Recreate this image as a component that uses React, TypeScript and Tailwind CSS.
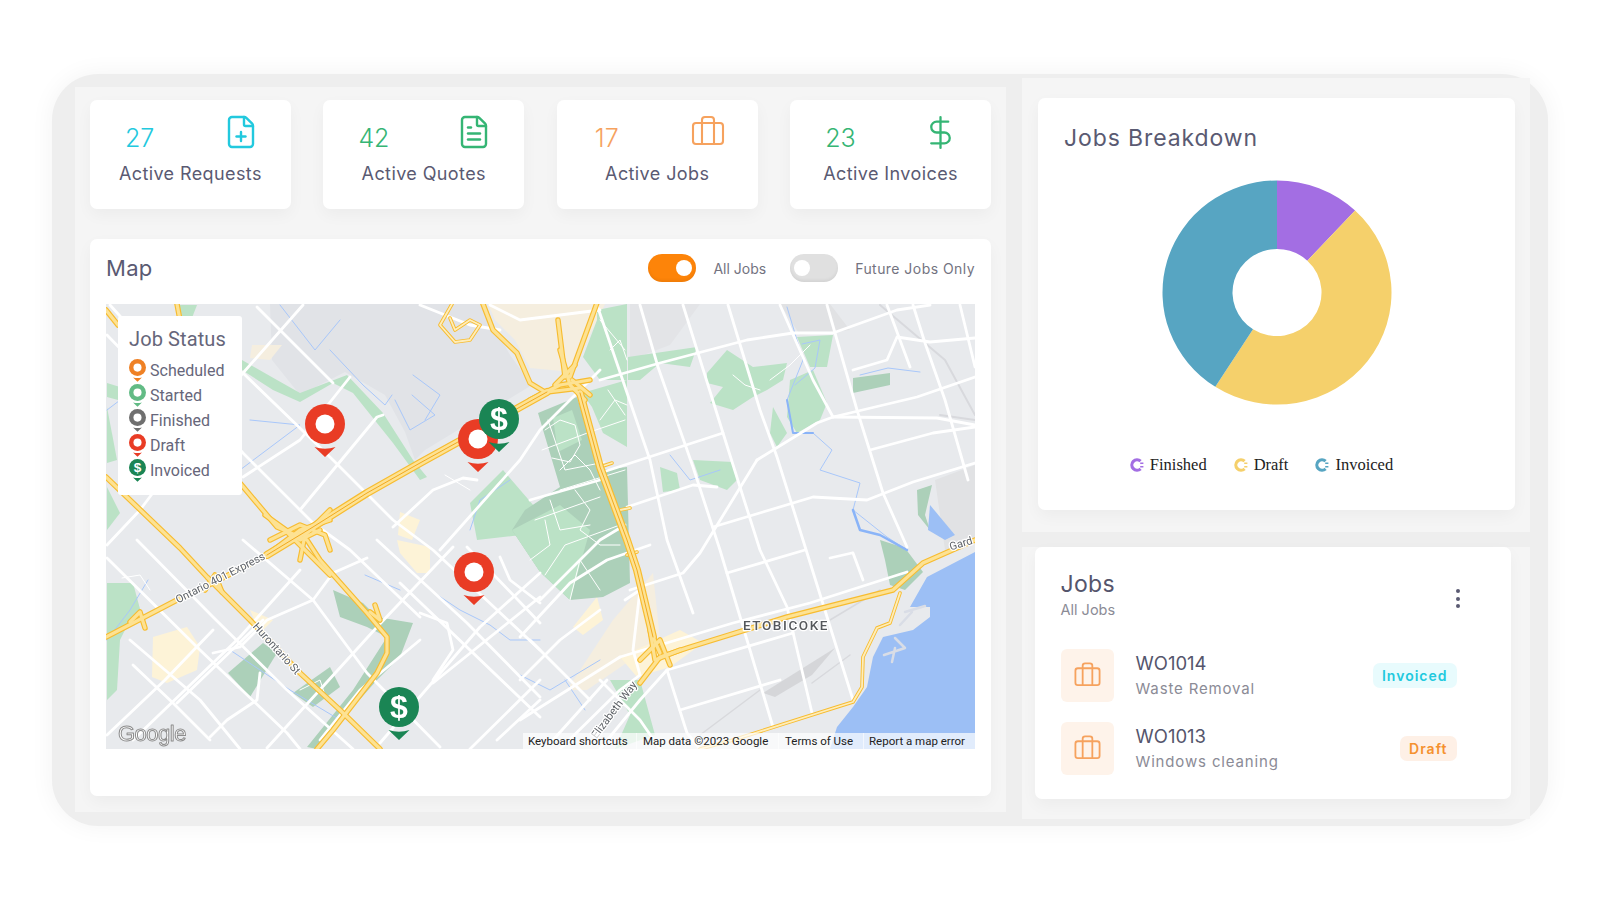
import { Briefcase, DollarSign, FilePlus, FileText } from 'lucide-react'
import type { ReactNode } from 'react'

const sans = 'font-["Inter",sans-serif]'

const stats = [
  { value: '27', label: 'Active Requests', color: 'text-[#22c9de]', pad: 'pl-[35px]', icon: <FilePlus size={36} strokeWidth={1.6} /> },
  { value: '42', label: 'Active Quotes', color: 'text-[#35b574]', pad: 'pl-[35px]', icon: <FileText size={36} strokeWidth={1.6} /> },
  { value: '17', label: 'Active Jobs', color: 'text-[#f6a25e]', pad: 'pl-[38px]', icon: <Briefcase size={36} strokeWidth={1.4} /> },
  { value: '23', label: 'Active Invoices', color: 'text-[#35b574]', pad: 'pl-[35px]', icon: <DollarSign size={37} strokeWidth={1.5} /> },
]

// everything in the map is in page pixels, the viewBox does the offset
const land = [
  { fill: '#e1e3e7', pts: '270,304 482,304 510,355 532,385 425,450 415,460 405,432 385,395 345,372 300,395 272,360' },
  { fill: '#e3e4e7', pts: '630,304 700,304 670,345 630,360' },
  { fill: '#e1e2e4', pts: '780,304 830,304 850,330 800,335' },
  { fill: '#f5eedf', pts: '488,304 605,304 572,372 530,368 515,340 495,320' },
  { fill: '#f5eedf', pts: '567,690 613,620 653,573 660,640 587,690' },
  { fill: '#fdf3d7', pts: '153,637 187,627 200,647 197,670 167,683 152,677' },
  { fill: '#fdf3d7', pts: '250,610 273,620 260,633' },
  { fill: '#fdf3d7', pts: '397,540 430,547 430,573 417,573 400,553' },
  { fill: '#fdf3d7', pts: '620,657 680,630 703,643 670,667 637,677' },
  { fill: '#fdf3d7', pts: '573,627 597,597 603,620 583,635' },
  { fill: '#fdf3d7', pts: '400,512 420,520 412,540 398,535' },
  { fill: '#f5eedf', pts: '252,345 282,345 270,360 250,358' },
  { fill: '#bbe2c6', pts: '242,360 277,380 300,393 347,375 383,413 413,460 427,477 420,480 393,443 353,393 333,383 300,402 273,390 242,370' },
  { fill: '#bbe2c6', pts: '107,383 120,387 118,400 107,397' },
  { fill: '#bbe2c6', pts: '107,407 117,460 107,463' },
  { fill: '#bbe2c6', pts: '107,487 120,513 107,530' },
  { fill: '#bbe2c6', pts: '177,305 197,305 190,323 180,320' },
  { fill: '#bbe2c6', pts: '470,503 503,470 540,513 540,533 477,540' },
  { fill: '#bbe2c6', pts: '107,583 133,583 143,620 130,620 120,640 117,690 107,700' },
  { fill: '#acd0b9', pts: '228,673 263,643 277,653 250,697' },
  { fill: '#acd0b9', pts: '333,590 363,603 377,617 413,623 400,657 377,680 333,730 317,749 307,747 353,690 387,637 367,627 340,617' },
  { fill: '#acd0b9', pts: '293,693 330,667 340,687 313,707' },
  { fill: '#bbe2c6', pts: '597,310 627,304 627,380 600,380 583,357 597,320' },
  { fill: '#bbe2c6', pts: '582,393 627,380 627,447 603,433 592,407' },
  { fill: '#acd0b9', pts: '538,413 577,397 600,470 627,467 630,583 603,597 570,600 540,572 512,530 525,510 560,487' },
  { fill: '#bbe2c6', pts: '553,418 572,410 582,440 558,452' },
  { fill: '#bbe2c6', pts: '512,530 560,505 590,530 570,600 540,572' },
  { fill: '#bbe2c6', pts: '628,357 697,347 690,367 660,363 640,380 628,380' },
  { fill: '#bbe2c6', pts: '707,373 727,350 753,367 787,363 783,380 767,390 753,397 733,410 710,403 723,387 707,383' },
  { fill: '#bbe2c6', pts: '797,337 833,335 827,367 810,367' },
  { fill: '#bbe2c6', pts: '790,380 813,370 827,403 820,420 797,433 787,417' },
  { fill: '#bbe2c6', pts: '773,407 787,433 777,447 770,433' },
  { fill: '#bbe2c6', pts: '693,460 733,462 737,480 727,490 700,480' },
  { fill: '#bbe2c6', pts: '660,467 677,473 680,490 663,492' },
  { fill: '#acd0b9', pts: '853,378 890,373 890,385 853,393' },
  { fill: '#acd0b9', pts: '917,490 932,485 925,515 930,530 918,515' },
  { fill: '#e1e2e4', pts: '935,480 975,465 975,540 945,550' },
  { fill: '#bbe2c6', pts: '610,680 640,680 655,735 615,749 630,715' },
  { fill: '#acd0b9', pts: '880,540 905,548 923,572 905,590 890,585 885,560' },
  { fill: '#9cbff5', pts: '975,552 927,577 910,607 930,607 930,617 913,630 883,637 873,657 867,687 853,707 837,727 830,749 975,749' },
  { fill: '#9cbff5', pts: '930,505 955,535 945,540 928,530' },
  { fill: '#d5d6d9', pts: '763,693 835,648 812,675 775,697' },
]

const rivers = [
  'M787 307L803 360L787 400L793 433L813 433L832 450L820 470L860 483L853 510L887 537L907 550',
  'M802 344L820 340L815 368L795 385',
  'M330 350L363 385L385 405L392 395',
  'M413 375L440 395L425 420',
  'M395 400L410 430L435 415L412 395',
  'M120 350L140 385L107 410',
  'M250 420L300 425L240 470',
  'M280 305L315 350L340 320',
  'M860 375L888 368L920 372',
  'M670 455L690 480L720 470',
  'M107 640L130 610L148 580',
  'M230 650L290 690L340 720',
  'M430 590L460 610L490 625L510 640L540 640',
  'M365 575L400 590',
  'M600 660L550 690L520 675',
  'M565 680L585 710',
  'M470 530L480 500L510 480',
]

const roads = [
  // right half, steep ones
  '640,305 658,367 693,467 720,550 747,640 773,727',
  '683,305 723,433 740,487 760,550 787,607 812,713',
  '728,305 760,410 777,457 803,540 853,700',
  '780,305 813,380 833,417',
  '827,305 857,410 883,493 907,547',
  '887,305 910,367',
  '913,305 925,343 945,400 968,480',
  '960,305 975,367',
  '597,305 650,460 667,540 693,613',
  '853,553 863,580',
  '667,670 687,733 700,749',
  // right half, flat ones
  '600,380 660,363 747,340 793,333 833,333 897,310 930,305',
  '600,473 723,433',
  '627,507 693,485 717,487',
  '853,370 887,360 897,337 930,342 975,338',
  '757,460 817,423 833,417 917,397 975,377',
  '833,417 937,418 975,425',
  '870,450 933,433 975,427',
  '713,527 813,497 867,500 913,482 975,463',
  '727,573 805,550',
  '830,558 852,553',
  '630,590 683,573 700,553 757,460',
  '620,657 733,623 810,603 907,572',
  '667,670 793,633',
  '680,710 780,680',
  '520,637 570,583 607,560 650,545',
  '520,720 620,657',
  '553,740 607,680',
  '625,600 640,590 633,650 640,675',
  '540,600 600,540 625,525',
  '530,500 600,480',
  '560,749 620,690 640,675',
  '600,749 640,700 667,670',
  '520,680 560,640 600,610',
  '470,749 540,680',
  '590,700 560,670 530,640',
  '600,680 640,720 660,749',
  // left half, going down to the right
  '243,373 333,460 393,520 433,550 540,650',
  '110,305 243,453 313,523 350,550 420,617',
  '257,307 333,383',
  '107,558 200,650 287,733 300,749',
  '137,540 213,617 287,690 353,749',
  '243,540 313,600 367,673 440,747',
  '400,583 540,717',
  '377,540 467,623 540,697',
  '467,547 540,623',
  '107,335 165,395',
  '130,640 200,700 240,749',
  '133,665 173,703 210,740',
  // left half, going up to the right
  '300,510 377,417 383,415',
  '243,477 300,440 350,377',
  '243,373 303,305',
  '107,545 140,510 243,373',
  '440,550 520,460 540,430 600,370',
  '133,740 240,637 300,570',
  '177,703 263,620',
  '267,748 377,627 453,547',
  '380,743 480,627 540,573',
  '433,683 540,597',
  '497,740 540,700',
  '107,735 165,680 213,630',
  '213,653 240,647 267,620 313,600 333,573 367,558',
  '490,305 520,320 600,310',
  '420,305 470,325 500,330',
  '320,740 360,690 420,640',
  '433,680 453,650 447,623 420,613',
  '500,557 510,580 540,603',
  '260,673 257,700 227,720 210,737',
  '393,527 433,490 463,478 477,480',
]

const parkRoads = [
  '548,420 565,470 605,462',
  '542,450 590,432 625,420',
  '560,490 625,470',
  '535,520 600,497',
  '545,575 565,545 620,525',
  '570,600 580,560 600,590',
  '600,320 625,350',
  '608,390 625,415',
  '545,430 560,420 575,425 580,445 570,462 552,458',
  '560,470 575,455 590,470 600,490',
  '575,490 590,510 580,530 600,545 620,545',
  '550,500 560,530 590,525',
  '610,350 620,340 627,360',
  '530,560 550,545 545,520',
  '600,420 615,400 627,405',
  '770,380 790,365 810,345',
  '733,375 745,385 760,390',
  '122,578 140,575 150,590',
  '300,690 320,680 325,695',
  '445,475 470,490',
]

const wideHighways = [
  '267,555 313,527 367,493 420,463 467,437 520,407 547,392',
  '580,393 600,467 627,540 637,570 653,637',
]

const highways = [
  '106,637 133,623 177,600 213,583 267,555',
  '547,392 580,388',
  '558,320 565,377',
  '597,303 570,377',
  '483,304 493,330 517,353 530,383 545,392',
  '653,637 660,653',
  '640,683 660,657 687,648 787,617 893,590 923,563 975,540',
  '106,477 180,548 207,577 250,620 300,673 340,710 380,749',
  '240,483 277,527 307,540 320,560 367,613 387,637 387,653 377,673 333,730 317,749',
  '177,304 180,320',
  '106,310 118,325',
  '270,540 300,525 325,535 330,550',
  '267,555 300,530 330,520',
  '285,530 300,545 330,575',
  '265,515 300,540 320,530',
  '300,560 305,535 330,510',
  '530,400 560,385 590,380',
  '560,350 570,385 585,400',
  '575,365 555,385',
  '572,380 590,395',
  '650,630 655,660 680,650',
  '640,660 660,640 670,665',
  '130,622 140,612 145,628',
  '205,590 215,575 222,592',
  '370,612 380,620 375,605',
]

const thinHighways = [
  '900,593 890,623 877,628 863,657 862,687 853,702 837,707 733,740 700,749',
  '452,304 440,325 455,342 470,340 480,325 470,320 455,330 450,318',
  '600,467 612,463',
  '620,510 630,508',
  '627,555 637,552',
]

function Pin({ x, y, r, color, dollar }: { x: number; y: number; r: number; color: string; dollar?: boolean }) {
  const k = r / 20
  return (
    <g transform={`translate(${x} ${y}) scale(${k})`}>
      <path d="M-10.5 23Q0 26.5 10.5 23L0 33Z" fill={color} />
      <circle r="20" fill={color} />
      {dollar ? (
        <text y="11" textAnchor="middle" fontSize="32" fontWeight="700" fill="#fff" fontFamily="Liberation Sans, sans-serif">
          $
        </text>
      ) : (
        <circle r="9.5" fill="#fff" />
      )}
    </g>
  )
}

function Toggle({ on }: { on: boolean }) {
  return (
    <div className={`flex h-7 w-12 items-center rounded-full px-[4px] shadow-[inset_0_-2px_3px_rgba(0,0,0,0.06)] ${on ? 'justify-end bg-[#fd8409]' : 'justify-start bg-[#e0e0e0]'}`}>
      <div className="h-4 w-4 rounded-full bg-white" />
    </div>
  )
}

const legend = [
  { label: 'Scheduled', color: '#ef8125' },
  { label: 'Started', color: '#62bb85' },
  { label: 'Finished', color: '#6f6f6f' },
  { label: 'Draft', color: '#e93c25' },
  { label: 'Invoiced', color: '#1a8554', dollar: true },
]

function MapView() {
  return (
    <div className="relative h-[445px] w-[869px] overflow-hidden bg-[#e8eaed]">
      <svg width="869" height="445" viewBox="106 304 869 445" className="block blur-[0.4px]" fill="none" strokeLinejoin="round" strokeLinecap="round">
        {land.map((a, i) => (
          <polygon key={i} points={a.pts} fill={a.fill} />
        ))}
        {rivers.map((d, i) => (
          <path key={i} d={d} stroke="#a8c7fa" strokeWidth="1" />
        ))}
        <path d="M787 400L793 433L813 433" stroke="#8ab4f8" strokeWidth="2" />
        <path d="M853 510L860 530L880 535L907 550" stroke="#8ab4f8" strokeWidth="2.5" />
        <path d="M812 683L850 655M760 690L700 735M830 620L880 590" stroke="#d8d9dd" strokeWidth="1.5" />
        <path d="M880 305L945 360L975 415M940 415L975 420" stroke="#d8d9dd" strokeWidth="2" />
        {/* marinas along the shore */}
        <path d="M905 612L925 606M900 625L912 612M884 655L905 648L895 638M892 662L895 648" stroke="#d9dde6" strokeWidth="2.5" />
        {roads.map((p, i) => (
          <polyline key={i} points={p} stroke="#fff" strokeWidth="2.8" />
        ))}
        {parkRoads.map((p, i) => (
          <polyline key={i} points={p} stroke="#fff" strokeWidth="1" />
        ))}
        {thinHighways.map((p, i) => (
          <polyline key={i} points={p} stroke="#f7bc30" strokeWidth="3.6" />
        ))}
        {thinHighways.map((p, i) => (
          <polyline key={i} points={p} stroke="#feedbb" strokeWidth="1.8" />
        ))}
        {highways.map((p, i) => (
          <polyline key={i} points={p} stroke="#f7bc30" strokeWidth="5.5" />
        ))}
        {wideHighways.map((p, i) => (
          <polyline key={i} points={p} stroke="#f7bc30" strokeWidth="8" />
        ))}
        {highways.map((p, i) => (
          <polyline key={i} points={p} stroke="#fde293" strokeWidth="3.2" />
        ))}
        {wideHighways.map((p, i) => (
          <polyline key={i} points={p} stroke="#fde293" strokeWidth="5.6" />
        ))}
        {wideHighways.map((p, i) => (
          <polyline key={i} points={p} stroke="#f2a91f" strokeWidth="1" />
        ))}
        <g fontFamily="Roboto, sans-serif" fontSize="11" fill="#5f6368" stroke="#fff" strokeWidth="2.5" style={{ paintOrder: 'stroke' }} textAnchor="middle">
          <text transform="translate(222 581) rotate(-27)">Ontario 401 Express</text>
          <text transform="translate(274 651) rotate(48)">Hurontario St</text>
          <text transform="translate(617 712) rotate(-53)">Elizabeth Way</text>
          <text transform="translate(962 547) rotate(-17)">Gard</text>
          <text x="786" y="630" fontSize="13.5" fontWeight="500" letterSpacing="1.6" fill="#55585c">
            ETOBICOKE
          </text>
        </g>
        <text x="118" y="741" fontFamily="Liberation Sans, sans-serif" fontSize="22" fill="#fff" stroke="#8d8d8d" strokeWidth="1" letterSpacing="-0.5">
          Google
        </text>
        <Pin x={325} y={424} r={20} color="#e93c25" />
        <Pin x={478} y={439} r={20} color="#e93c25" />
        <Pin x={499} y={419} r={20} color="#1a8554" dollar />
        <Pin x={474} y={572} r={20} color="#e93c25" />
        <Pin x={399} y={707} r={20} color="#1a8554" dollar />
      </svg>

      <div className="absolute left-[12px] top-[12px] h-[179px] w-[124px] rounded-[3px] bg-white pl-[11px] pt-[10px] font-['Roboto',sans-serif] text-[#66667a]">
        <div className="text-[20px] leading-[26px] tracking-[0.1px]">Job Status</div>
        <div className="mt-[6px] flex flex-col">
          {legend.map((l) => (
            <div key={l.label} className="flex h-[25px] items-center gap-[4px] text-[16px]">
              <svg width="17" height="24" viewBox="-20 -20 40 56" className="shrink-0">
                <Pin x={0} y={0} r={20} color={l.color} dollar={l.dollar} />
              </svg>
              <span>{l.label}</span>
            </div>
          ))}
        </div>
      </div>

      <div className="absolute bottom-0 right-0 flex h-[16px] w-[452px] items-center bg-white/70 pt-[1px] font-['Roboto',sans-serif] text-[11.5px] text-[#222]">
        <span className="w-[113px] pl-[5px]">Keyboard shortcuts</span>
        <span className="w-[142px] border-l border-white/60 pl-[6px]">Map data ©2023 Google</span>
        <span className="w-[85px] border-l border-white/60 pl-[6px]">Terms of Use</span>
        <span className="border-l border-white/60 pl-[5px]">Report a map error</span>
      </div>
    </div>
  )
}

function Card({ className, children }: { className: string; children: ReactNode }) {
  return <div className={`rounded-[7px] bg-white shadow-[0_6px_16px_rgba(0,0,0,0.04)] ${className}`}>{children}</div>
}

function Donut() {
  const cx = 115
  const cy = 115
  const arc = (from: number, to: number, R: number, r: number) => {
    const p = (a: number, rad: number) => {
      const t = (a * Math.PI) / 180
      return `${(cx + rad * Math.sin(t)).toFixed(2)} ${(cy - rad * Math.cos(t)).toFixed(2)}`
    }
    const big = to - from > 180 ? 1 : 0
    return `M${p(from, R)}A${R} ${R} 0 ${big} 1 ${p(to, R)}L${p(to, r)}A${r} ${r} 0 ${big} 0 ${p(from, r)}Z`
  }
  return (
    <svg width="230" height="225" viewBox="0 0 230 230" preserveAspectRatio="none">
      <path d={arc(0, 43, 114.5, 44.5)} fill="#a36ee3" />
      <path d={arc(43, 212.6, 114.5, 44.5)} fill="#f5d06b" />
      <path d={arc(212.6, 360, 114.5, 44.5)} fill="#57a5c2" />
    </svg>
  )
}

function RingDot({ color }: { color: string }) {
  return (
    <svg width="14" height="14" viewBox="0 0 14 14" fill="none">
      <path d="M10.6 3.2A5.2 5.2 0 1 0 10.6 10.8" stroke={color} strokeWidth="3.2" />
      <path d="M10.2 5.2L13.4 5.2M10.2 8.8L13.4 8.8" stroke={color} strokeWidth="1.6" />
    </svg>
  )
}

function JobRow({ code, name, badge, tone, top }: { code: string; name: string; badge: string; tone: string; top: string }) {
  return (
    <div className={`flex h-[53px] items-center ${top}`}>
      <div className="flex h-[53px] w-[53px] items-center justify-center rounded-[6px] bg-[#fef3ea] text-[#f6a25e]">
        <Briefcase size={29} strokeWidth={1.5} />
      </div>
      <div className="ml-[22px] flex-1">
        <div className="text-[18.5px] leading-[26px] text-[#55556c]">{code}</div>
        <div className="text-[15px] leading-[26px] tracking-[0.85px] text-[#8b8b96]">{name}</div>
      </div>
      <div className={`flex h-[25px] items-center rounded-[7px] px-[9px] text-[14px] font-semibold tracking-[1px] ${tone}`}>{badge}</div>
    </div>
  )
}

export default function App() {
  return (
    <div className={`h-[900px] w-[1600px] overflow-hidden bg-white pl-[52px] pt-[74px] ${sans}`}>
      <div className="flex h-[752px] w-[1496px] items-start rounded-[46px] bg-[#eeeeee] pl-[23px] shadow-[0_0_24px_rgba(0,0,0,0.05)]">
        <div className="mt-[13px] h-[725px] w-[931px] bg-[#f5f5f5] pl-[15px] pt-[13px]">
          <div className="grid w-[901px] grid-cols-4 gap-x-[32.6px]">
            {stats.map((s) => (
              <Card key={s.label} className="h-[109px] pt-[14px]">
                <div className={`flex h-[48px] items-start justify-between pr-[32px] ${s.pad} ${s.color}`}>
                  <span className="mt-[9px] text-[25px] font-light leading-[30px]">{s.value}</span>
                  {s.icon}
                </div>
                <div className="text-center text-[18px] leading-[24px] tracking-[0.4px] text-[#5a5a72]">{s.label}</div>
              </Card>
            ))}
          </div>

          <Card className="mt-[30px] h-[557px] w-[901px] px-[16px]">
            <div className="flex h-[65px] items-center pb-[7px]">
              <span className="text-[22px] tracking-[0.3px] text-[#5a5a72]">Map</span>
              <div className="ml-auto flex items-center text-[14px] text-[#73737f]">
                <Toggle on />
                <span className="ml-[17px]">All Jobs</span>
                <span className="ml-[24px]">
                  <Toggle on={false} />
                </span>
                <span className="ml-[17px] tracking-[0.45px]">Future Jobs Only</span>
              </div>
            </div>
            <MapView />
          </Card>
        </div>

        <div className="ml-[16px] mt-[4px] flex w-[508px] flex-col gap-[15px]">
          <div className="h-[454px] bg-[#f5f5f5] pl-[16px] pt-[20px]">
            <Card className="h-[412px] w-[477px] pt-[25px]">
              <div className="pl-[26px] text-[23px] leading-[30px] tracking-[0.9px] text-[#5a5a72]">Jobs Breakdown</div>
              <div className="mt-[27px] flex justify-center">
                <Donut />
              </div>
              <div className="mt-[48px] flex justify-center gap-[27px] pr-[30px] font-['Liberation_Serif',serif] text-[16.5px] text-[#222]">
                <span className="flex items-center gap-[6px]"><RingDot color="#a36ee3" />Finished</span>
                <span className="flex items-center gap-[6px]"><RingDot color="#f5d06b" />Draft</span>
                <span className="flex items-center gap-[6px]"><RingDot color="#57a5c2" />Invoiced</span>
              </div>
            </Card>
          </div>

          <div className="h-[272px] bg-[#f5f5f5] pl-[12.5px]">
            <Card className="h-[252px] w-[476px] px-[26px] pt-[22px]">
              <div className="flex items-start justify-between pr-[26px]">
                <div>
                  <div className="text-[23px] leading-[30px] tracking-[0.3px] text-[#55556c]">Jobs</div>
                  <div className="text-[14.5px] leading-[22px] text-[#8b8b96]">All Jobs</div>
                </div>
                <div className="mr-[-1px] mt-[20px] flex flex-col gap-[3.5px]">
                  <span className="h-[4px] w-[4px] rounded-full bg-[#5a5a72]" />
                  <span className="h-[4px] w-[4px] rounded-full bg-[#5a5a72]" />
                  <span className="h-[4px] w-[4px] rounded-full bg-[#5a5a72]" />
                </div>
              </div>
              <div className="pr-[28px]">
                <JobRow code="WO1014" name="Waste Removal" badge="Invoiced" tone="bg-[#e8fbfd] text-[#22c9de]" top="mt-[28px]" />
                <JobRow code="WO1013" name="Windows cleaning" badge="Draft" tone="bg-[#fef0e6] text-[#f5912f]" top="mt-[20px]" />
              </div>
            </Card>
          </div>
        </div>
      </div>
    </div>
  )
}
